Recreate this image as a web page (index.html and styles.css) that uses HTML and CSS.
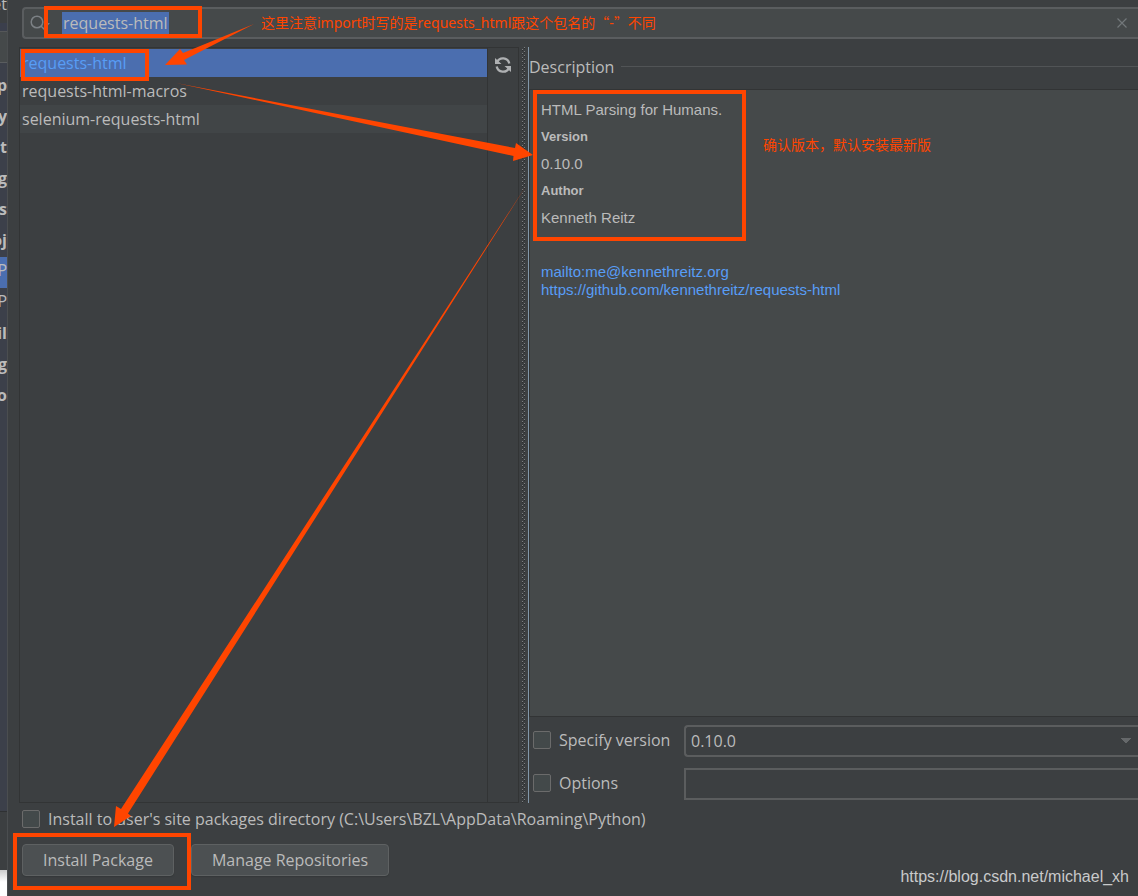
FILE: index.html
```html
<!DOCTYPE html>
<html lang="en">
<head>
<meta charset="utf-8">
<title>Available Packages</title>
<link rel="stylesheet" href="styles.css">
</head>
<body>
<aside class="behind">
  <div class="behind-head"><span>et</span></div>
  <div class="behind-search"></div>
  <ul class="behind-tree">
    <li>p</li><li>y</li><li>t</li><li>g</li><li>rs</li><li>oj</li>
    <li class="leaf current">P</li><li class="leaf">P</li>
    <li>il</li><li>ng</li><li>o</li>
  </ul>
  <div class="behind-foot"></div>
  <div class="behind-page"></div>
</aside>

<main class="dialog">
  <div class="search">
    <svg class="search-icon" width="24" height="20" viewBox="0 0 24 20" fill="none" aria-hidden="true">
      <circle cx="7" cy="9" r="5.800" stroke="#7c8185" stroke-width="1.500"/>
      <path d="M11 13l4.500 4.500" stroke="#7c8185" stroke-width="1.500"/>
      <path d="M14 10h6l-3 3.500z" fill="#7c8185"/>
    </svg>
    <input class="search-input" type="text" value="requests-html" aria-label="Search packages">
    <button class="clear" type="button" aria-label="Clear">
      <svg width="10" height="10" viewBox="0 0 10 10"><path d="M.5.5l9 9M9.500.5l-9 9" stroke="#72777a" stroke-width="1.200"/></svg>
    </button>
  </div>

  <div class="split">
    <section class="packages">
      <ul class="package-list">
        <li class="selected">requests-html</li>
        <li>requests-html-macros</li>
        <li class="striped">selenium-requests-html</li>
      </ul>
      <div class="toolbar">
        <button class="refresh" type="button" aria-label="Reload list">
          <svg width="18" height="18" viewBox="0 0 18 18" fill="none">
            <path d="M3 6.200A6.500 6.500 0 0 1 15.300 7.500M15 11.800A6.500 6.500 0 0 1 2.700 10.500" stroke="#afb1b3" stroke-width="2.300"/>
            <path d="M1 2v6h6.500zM17 16v-6h-6.500z" fill="#afb1b3"/>
          </svg>
        </button>
      </div>
    </section>
    <div class="divider"></div>
    <section class="details">
      <h2 class="group-title">Description</h2>
      <div class="description">
        <p>HTML Parsing for Humans.</p>
        <h3>Version</h3>
        <p>0.10.0</p>
        <h3>Author</h3>
        <p>Kenneth Reitz</p>
        <div class="links">
          <a href="mailto:me@kennethreitz.org">mailto:me@kennethreitz.org</a>
          <a href="https://github.com/kennethreitz/requests-html">https://github.com/kennethreitz/requests-html</a>
        </div>
      </div>
      <div class="options">
        <label class="check"><input type="checkbox"><span>Specify version</span></label>
        <select class="field version" aria-label="Version"><option>0.10.0</option></select>
        <label class="check"><input type="checkbox"><span>Options</span></label>
        <input class="field" type="text" aria-label="Options">
      </div>
    </section>
  </div>

  <label class="check user-site"><input type="checkbox"><span>Install to user's site packages directory (C:\Users\BZL\AppData\Roaming\Python)</span></label>
  <div class="actions">
    <button class="button" type="button">Install Package</button>
    <button class="button" type="button">Manage Repositories</button>
  </div>
</main>

<svg class="marks" width="760" height="896" viewBox="0 0 760 896" aria-hidden="true">
  <g fill="none" stroke="#ff4500" stroke-width="4">
    <rect x="46" y="8" width="154" height="28"/>
    <rect x="23" y="51" width="124" height="28"/>
    <rect x="535" y="92" width="209" height="147"/>
    <rect x="15" y="835" width="174" height="53"/>
  </g>
  <g fill="#ff4500">
    <path d="M254 24L184 60L187 64.500L165 65L180 49L183 53z"/>
    <path d="M176 83L515 148L516 143L533 155L513 161L513.500 156z"/>
    <path d="M526 186L128 813.500L131 816L114 827L116 806L121 809z"/>
  </g>
</svg>
<p class="note note-name" lang="zh-CN">这里注意import时写的是requests_html跟这个包名的<span class="wide">“</span>-<span class="wide">”</span>不同</p>
<p class="note note-version" lang="zh-CN">确认版本，默认安装最新版</p>
<p class="watermark">https://blog.csdn.net/michael_xh</p>
</body>
</html>
```
FILE: styles.css
```css
* { box-sizing: border-box; }

body {
  margin: 0;
  min-height: 100vh;
  display: flex;
  position: relative;
  overflow: hidden;
  background: #3c3f41;
  color: #bbbbbb;
  font: 16px/28px "Open Sans", "Noto Sans", sans-serif;
}

ul, p, h2, h3 { margin: 0; padding: 0; list-style: none; font-weight: 400; }
button, input, select { font: inherit; color: inherit; }
button { padding: 0; border: 0; background: none; }

/* Edge of the window behind the dialog */
.behind {
  flex: 0 0 7px;
  display: flex;
  flex-direction: column;
  overflow: hidden;
  background: #3c3f41;
}
.behind-head, .behind-tree li { display: flex; justify-content: flex-end; }
.behind-head { height: 32px; line-height: 8px; border-bottom: 1px solid #555759; background: linear-gradient(#3c3f41 23px, #3b3f4c 23px); }
.behind-search { height: 31px; background: #45494a; border-bottom: 1px solid #5a5d5f; }
.behind-tree { flex: 1; padding-top: 8px; background: #3c404a; border-bottom: 1px solid #2f3133; }
.behind-tree li { height: 31px; line-height: 29px; font-weight: 700; }
.behind-tree .leaf { font-weight: 400; line-height: 27px; }
.behind-tree .current { background: #4b6eaf; }
.behind-foot { height: 58px; }
.behind-page { height: 26px; background: linear-gradient(#cccccc, #ffffff 12px); }

.dialog {
  flex: 1;
  min-width: 0;
  display: flex;
  flex-direction: column;
  padding: 7px 0 20px 11px;
  border-left: 1px solid #4b4e50;
}

.search {
  display: flex;
  align-items: center;
  height: 32px;
  margin-left: 3px;
  padding: 0 11px 0 6px;
  border: 2px solid #5a5d5f;
  border-right: 0;
  border-radius: 4px 0 0 4px;
  background: #45494a;
}
.search-icon { margin-right: 8px; }
.search-input {
  field-sizing: content;
  height: 22px;
  padding: 0 1px;
  border: 0;
  outline: 0;
  background: #4b6eaf;
}
.clear { display: flex; margin-left: auto; }

.split { flex: 1; display: flex; margin-top: 8px; }
.packages {
  flex: 0 1 500px;
  display: flex;
  border: 1px solid #323435;
}
.package-list { flex: 1; padding-top: 1px; }
.package-list li { height: 28px; padding-left: 2px; }
.package-list .selected { background: #4b6eaf; color: #589df6; }
.package-list .striped { background: #414547; }
.toolbar { flex: 0 0 31px; border-left: 1px solid #323435; }
.refresh { display: flex; margin: 8px 0 0 6px; }

.divider {
  flex: 0 0 10px;
  border-right: 1px solid #8297a8;
  background:
    linear-gradient(#7b7e80 1px, #2b2d2e 1px, #2b2d2e 2px, transparent 2px) 3px 2px / 1px 4px repeat-y,
    linear-gradient(#7b7e80 1px, #2b2d2e 1px, #2b2d2e 2px, transparent 2px) 5px 4px / 1px 4px repeat-y;
}

.details { flex: 1; min-width: 0; display: flex; flex-direction: column; }
.group-title { display: flex; align-items: center; gap: 7px; height: 42px; padding-bottom: 3px; font-size: 16px; }
.group-title::after { content: ""; flex: 1; height: 1px; background: #515456; }
.description {
  flex: 1;
  padding: 6px 11px;
  border: 1px solid #323435;
  border-right: 0;
  background: #45494a;
  font: 15px/27px "Liberation Sans", Arial, sans-serif;
}
.description h3 { font-size: 13px; font-weight: 700; }
.links { margin-top: 32px; display: flex; flex-direction: column; align-items: flex-start; line-height: 18px; }
.links a { color: #589df6; text-decoration: none; }

.options {
  display: grid;
  grid-template-columns: 151px 1fr;
  row-gap: 11px;
  padding: 8px 0 3px 4px;
  align-items: center;
}
.check { display: flex; align-items: center; gap: 8px; white-space: nowrap; }
.options .check { padding-bottom: 2px; }
.check input {
  appearance: none;
  width: 18px;
  height: 18px;
  margin: 0;
  border: 1px solid #6b6b6b;
  border-radius: 2px;
  background: #43494a;
}
.field {
  width: 100%;
  height: 32px;
  margin: 0;
  padding: 0 5px;
  border: 2px solid #5b5d5e;
  border-right: 0;
  border-radius: 0;
  background: transparent;
}
.version {
  appearance: none;
  border-radius: 4px 0 0 4px;
  background:
    linear-gradient(to bottom left, #65686a 50%, transparent 50%) right 12px center / 5px 6px no-repeat,
    linear-gradient(to bottom right, #65686a 50%, transparent 50%) right 7px center / 5px 6px no-repeat;
}

.user-site { height: 32px; margin: 0 0 2px 3px; }
.actions { display: flex; gap: 17px; margin: 7px 0 0 3px; }
.button {
  height: 32px;
  padding: 0 20px;
  border: 1px solid #5e6162;
  border-radius: 4px;
  background: #4c5052;
  box-shadow: 0 1px 1px #35383a;
}

/* Annotation layer drawn over the dialog */
.marks { position: absolute; left: 0; top: 0; pointer-events: none; }
.note {
  position: absolute;
  color: #ff4500;
  font: 14px/20px "Noto Sans", "Noto Sans CJK SC", sans-serif;
  white-space: nowrap;
}
.note .wide { font-family: "Noto Sans CJK SC", sans-serif; line-height: 1; }
.note-name { left: 261px; top: 13px; }
.note-version { left: 763px; top: 135px; }
.watermark {
  position: absolute;
  right: 9px;
  bottom: 9px;
  color: #c9cacb;
  font: 16px/20px "Liberation Sans", Arial, sans-serif;
}
```
